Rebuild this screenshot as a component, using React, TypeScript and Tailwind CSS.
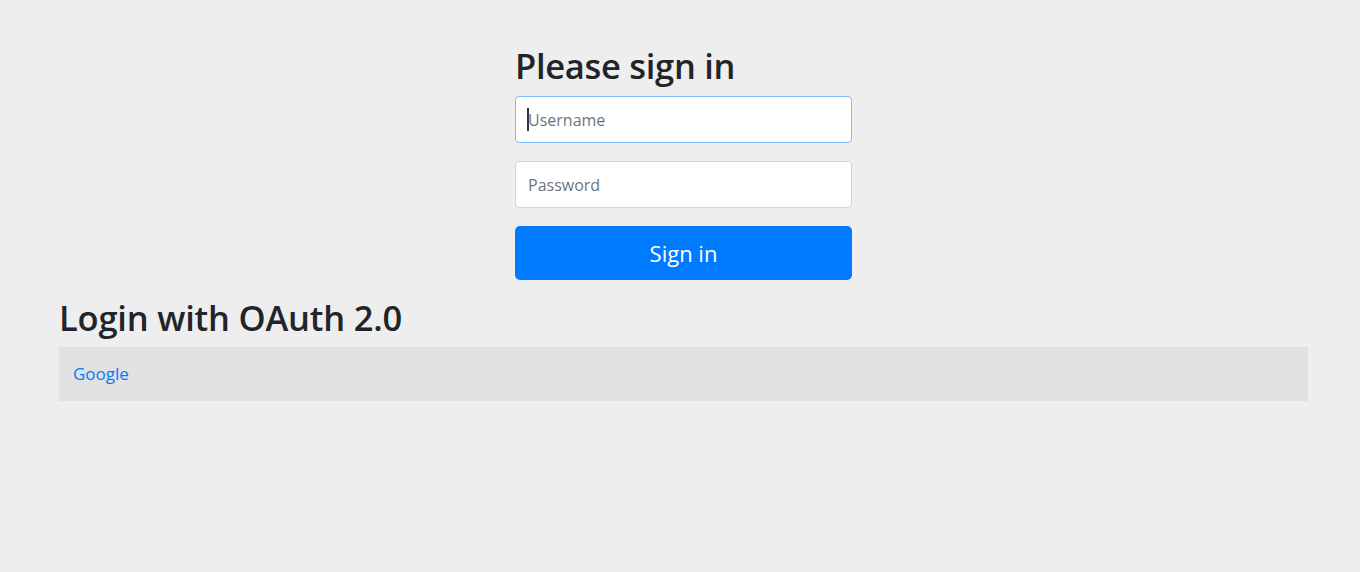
import React from 'react';

const font = { fontFamily: '"Open Sans", "Noto Sans", sans-serif' };

const App = () => {
  return (
    <div className="min-h-[572px] bg-[#eeeeee] text-[#212529]" style={font}>
      <div className="pl-[59px] pr-[52px]">
        <form className="mx-auto w-[337px] pt-[43px]" onSubmit={(e) => e.preventDefault()}>
          <h2 className="text-[34.5px] font-semibold leading-[46px] mb-[7px] tracking-[-0.3px]">Please sign in</h2>
          <div className="relative">
            <input
              type="text"
              placeholder="Username"
              className="block w-full h-[47px] rounded-[4px] border border-[#80bdff] bg-white px-[12px] text-[16px] outline-none placeholder:text-[#6c757d]"
            />
            <span className="absolute left-[12px] top-[12px] h-[23px] w-[2px] bg-[#333]" />
          </div>
          <input
            type="password"
            placeholder="Password"
            className="mt-[18px] block w-full h-[47px] rounded-[4px] border border-[#ced4da] bg-white px-[12px] text-[16px] outline-none placeholder:text-[#6c757d]"
          />
          <button
            type="submit"
            className="mt-[18px] block w-full h-[54px] rounded-[5px] bg-[#007bff] text-white text-[22px]"
          >
            Sign in
          </button>
        </form>
        <h2 className="mt-[15px] text-[34.5px] font-semibold leading-[46px] tracking-[-0.2px]">Login with OAuth 2.0</h2>
        <table className="mt-[6px] w-full border-collapse">
          <tbody>
            <tr className="bg-[#e1e1e1]">
              <td className="h-[54px] px-[14px] text-[17px]">
                <a href="#" className="text-[#007bff]">Google</a>
              </td>
            </tr>
          </tbody>
        </table>
      </div>
    </div>
  );
};

export default App;
